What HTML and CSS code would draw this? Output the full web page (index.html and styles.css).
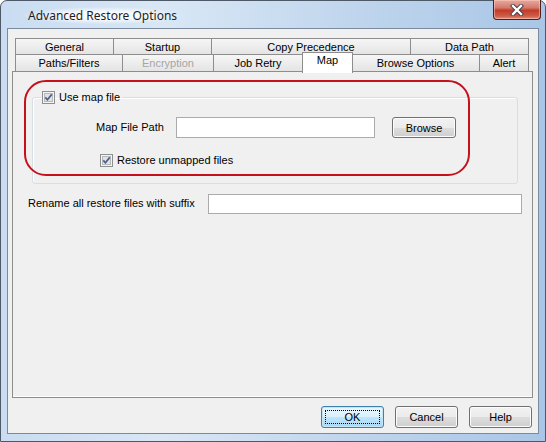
FILE: index.html
```html
<!DOCTYPE html>
<html lang="en">
<head>
    <meta charset="UTF-8">
    <title>Advanced Restore Options</title>
    <link rel="stylesheet" href="styles.css">
</head>
<body>
    <div class="window">
        <div class="titlebar">
            <span class="title">Advanced Restore Options</span>
            <button class="close-btn" aria-label="Close">
                <svg width="14" height="12" viewBox="0 0 14 12">
                    <path d="M3 2 L11 10 M11 2 L3 10" stroke="#3b3f4a" stroke-width="4.2" stroke-linecap="square"/>
                    <path d="M3 2 L11 10 M11 2 L3 10" stroke="#fff" stroke-width="2.4" stroke-linecap="square"/>
                </svg>
            </button>
        </div>

        <div class="client">
            <div class="tabs">
                <div class="tab-row">
                    <div class="tab tab-general">General</div>
                    <div class="tab tab-startup">Startup</div>
                    <div class="tab tab-copy">Copy Precedence</div>
                    <div class="tab tab-datapath">Data Path</div>
                </div>
                <div class="tab-row">
                    <div class="tab tab-paths">Paths/Filters</div>
                    <div class="tab tab-encryption disabled">Encryption</div>
                    <div class="tab tab-retry">Job Retry</div>
                    <div class="tab tab-map selected">Map</div>
                    <div class="tab tab-browse">Browse Options</div>
                    <div class="tab tab-alert">Alert</div>
                </div>
            </div>

            <div class="tab-panel">
                <fieldset class="group">
                    <legend>
                        <label class="check">
                            <span class="checkbox">
                                <svg width="13" height="13" viewBox="0 0 13 13"><use href="#check-mark"></use></svg>
                            </span>
                            Use map file
                        </label>
                    </legend>
                    <div class="form-row">
                        <span class="field-label">Map File Path</span>
                        <input type="text" class="text-input map-path">
                        <button class="btn browse-btn">Browse</button>
                    </div>
                    <label class="check restore-check">
                        <span class="checkbox">
                            <svg width="13" height="13" viewBox="0 0 13 13"><use href="#check-mark"></use></svg>
                        </span>
                        Restore unmapped files
                    </label>
                </fieldset>

                <div class="suffix-row">
                    <span class="field-label suffix-label">Rename all restore files with suffix</span>
                    <input type="text" class="text-input suffix-input">
                </div>

                <div class="highlight"></div>
            </div>

            <div class="dialog-buttons">
                <button class="btn default-btn"><span class="focus-ring">OK</span></button>
                <button class="btn">Cancel</button>
                <button class="btn">Help</button>
            </div>
        </div>
    </div>

    <svg style="display: none;">
        <symbol id="check-mark" viewBox="0 0 13 13">
            <rect x="0.5" y="0.5" width="12" height="12" fill="#f4f4f4" stroke="#8e8f8f"/>
            <rect x="2.5" y="2.5" width="8" height="8" fill="#e2e2e2" stroke="#b9b9b9"/>
            <path d="M3.3 6.4 L5.4 8.8 L9.8 3.4" fill="none" stroke="#4a5f8c" stroke-width="1.7"/>
        </symbol>
    </svg>
</body>
</html>
```

FILE: styles.css
```css
* {
    box-sizing: border-box;
}

body {
    margin: 0;
    font-family: "Liberation Sans", Arial, sans-serif;
    font-size: 11px;
    color: #000;
    background: #fff;
}

/* window frame */
.window {
    width: 546px;
    height: 442px;
    padding: 0 6px 7px;
    border: 1px solid #4d5967;
    border-radius: 7px 7px 0 0;
    background: linear-gradient(to right, #c9dcf1 0%, #d9e7f5 30%, #bcd3ec 70%, #a9c6e6 100%);
    display: flex;
    flex-direction: column;
}

.titlebar {
    height: 27px;
    display: flex;
    align-items: flex-start;
    position: relative;
}

.title {
    font-family: "Noto Sans", "Open Sans", sans-serif;
    font-size: 12px;
    margin: 6px 0 0 15px;
    padding: 0 6px;
    background: radial-gradient(ellipse at center, rgba(255, 255, 255, 0.85) 30%, rgba(255, 255, 255, 0) 72%);
    color: #1e1e1e;
}

.close-btn {
    margin-left: auto;
    margin-right: -2px;
    margin-top: -1px;
    width: 48px;
    height: 20px;
    border: 1px solid #4f2019;
    border-top: none;
    border-radius: 0 0 4px 4px;
    background: linear-gradient(#e8a99e 0%, #d47b6d 40%, #c23b28 55%, #cf5e48 85%, #e0917c 100%);
    box-shadow: inset 0 0 0 1px rgba(255, 210, 200, 0.5);
    padding: 0;
    display: flex;
    align-items: center;
    justify-content: center;
}

/* client area */
.client {
    flex: 1;
    border: 1px solid #7b8a9d;
    background: #f0f0f0;
    padding-top: 9px;
    display: flex;
    flex-direction: column;
}

.tabs {
    margin-left: 7px;
    width: 514px;
}

.tab-row {
    display: flex;
    height: 17px;
}

.tab-row:first-child {
    height: 16px;
}

.tab {
    height: 100%;
    border: 1px solid #8d8d8d;
    border-bottom: none;
    margin-left: -1px;
    background: linear-gradient(#f6f6f6, #e4e4e4);
    text-align: center;
    line-height: 16px;
    white-space: nowrap;
}

.tab:first-child {
    margin-left: 0;
}

.tab.disabled {
    color: #a5a5a5;
}

.tab.selected {
    background: #fff;
    height: 21px;
    margin-top: -2px;
    line-height: 14px;
    position: relative;
    z-index: 2;
    margin-right: -1px;
}

.tab-general { width: 99px; }
.tab-startup { width: 99px; }
.tab-copy { width: 200px; }
.tab-datapath { width: 119px; }

.tab-paths { width: 108px; }
.tab-encryption { width: 92px; }
.tab-retry { width: 90px; }
.tab-map { width: 51px; }
.tab-browse { width: 129px; }
.tab-alert { width: 50px; }

.tab-panel {
    position: relative;
    margin: 0 5px 0 4px;
    height: 327px;
    border: 1px solid #8d8d8d;
    box-shadow: inset 0 -1px 0 #fff;
}

/* map file group */
.group {
    margin: 18px 14px 0 19px;
    padding: 13px 0 16px;
    border: 1px solid #d5dfe5;
    border-radius: 3px;
    box-shadow: inset 1px 1px 0 #fff;
}

.group legend {
    margin-left: 8px;
    padding: 0 2px 0 1px;
}

.check {
    display: flex;
    align-items: center;
    gap: 4px;
    height: 14px;
}

.checkbox {
    width: 13px;
    height: 13px;
    display: block;
}

.checkbox svg {
    display: block;
}

.form-row {
    display: flex;
    align-items: center;
    padding-left: 63px;
}

.field-label {
    width: 80px;
    margin-top: -2px;
}

.text-input {
    height: 21px;
    border: 1px solid #ababab;
    background: #fff;
    margin: 0;
    padding: 0 3px;
    font: inherit;
}

.map-path {
    width: 199px;
}

.btn {
    width: 63px;
    height: 22px;
    padding: 0;
    font: inherit;
    color: #000;
    border: 1px solid #707070;
    border-radius: 3px;
    background: linear-gradient(#f2f2f2 0%, #ebebeb 50%, #dddddd 51%, #cfcfcf 100%);
    box-shadow: inset 0 0 0 1px #fcfcfc;
}

.browse-btn {
    width: 64px;
    height: 21px;
    margin-left: 17px;
}

.restore-check {
    margin: 15px 0 0 67px;
}

.suffix-row {
    display: flex;
    align-items: center;
    margin-top: 10px;
    padding-left: 15px;
}

.suffix-label {
    width: 180px;
}

.suffix-input {
    width: 314px;
    height: 20px;
}

/* red annotation around the map file group */
.highlight {
    position: absolute;
    left: 11px;
    top: 8px;
    width: 446px;
    height: 96px;
    border: 2px solid #c4111b;
    border-radius: 22px;
    pointer-events: none;
}

/* OK / Cancel / Help */
.dialog-buttons {
    display: flex;
    justify-content: flex-end;
    gap: 11px;
    padding: 8px 6px 0 0;
}

.default-btn {
    border-color: #3c7fb1;
    background: linear-gradient(#eaf6fd 0%, #d9f0fc 50%, #bee6fd 51%, #a7d9f5 100%);
    box-shadow: inset 0 0 0 1px #c4e5f6;
    padding: 3px;
}

.focus-ring {
    display: flex;
    align-items: center;
    justify-content: center;
    height: 100%;
    border: 1px dotted #000;
}
```
